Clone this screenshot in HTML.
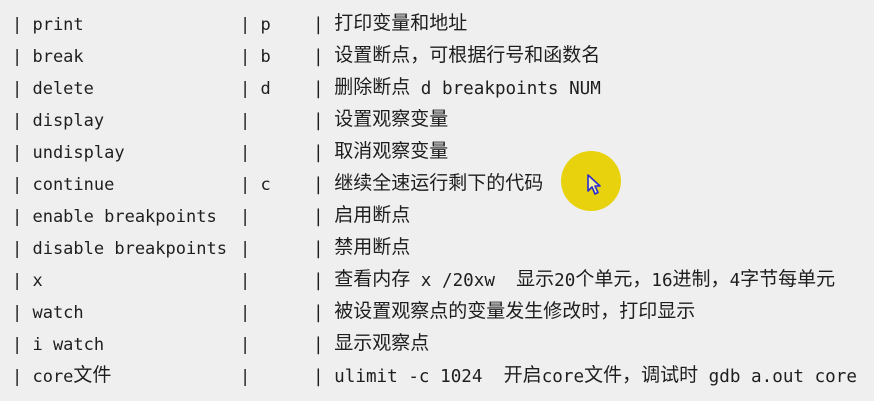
<!DOCTYPE html>
<html><head><meta charset="utf-8"><style>
body{margin:0;width:874px;height:401px;background:#efefef;overflow:hidden;position:relative;font-family:"DejaVu Sans Mono","Noto Sans CJK SC",monospace;font-size:17px;color:#1e1e1e}
.r{position:absolute;left:0;height:32px;line-height:32px;white-space:pre}
.r span{position:absolute;top:0}
.a{left:12px}.b{left:240px}.c{left:313px;font-size:17.6px}
i{font-style:normal;font-family:"Noto Sans CJK SC",sans-serif;font-size:19px;line-height:1;vertical-align:1px}
</style></head><body>
<div style="position:absolute;left:561px;top:151px;width:60px;height:60px;border-radius:50%;background:#e8d20e"></div>
<svg style="position:absolute;left:586px;top:173px" width="18" height="24" viewBox="0 0 18 24"><path d="M2 2 L2 18 L6 14 L9 21 L12 19.5 L9 13 L14 13 Z" fill="#f4ef9a" stroke="#2a2ad0" stroke-width="1.6" stroke-linejoin="round"/></svg>
<div class="r" style="top:9px"><span class="a">| print</span><span class="b">| p</span><span class="c">| <i>打印变量和地址</i></span></div>
<div class="r" style="top:41px"><span class="a">| break</span><span class="b">| b</span><span class="c">| <i>设置断点，可根据行号和函数名</i></span></div>
<div class="r" style="top:73px"><span class="a">| delete</span><span class="b">| d</span><span class="c">| <i>删除断点</i> d breakpoints NUM</span></div>
<div class="r" style="top:105px"><span class="a">| display</span><span class="b">|</span><span class="c">| <i>设置观察变量</i></span></div>
<div class="r" style="top:137px"><span class="a">| undisplay</span><span class="b">|</span><span class="c">| <i>取消观察变量</i></span></div>
<div class="r" style="top:169px"><span class="a">| continue</span><span class="b">| c</span><span class="c">| <i>继续全速运行剩下的代码</i></span></div>
<div class="r" style="top:201px"><span class="a">| enable breakpoints</span><span class="b">|</span><span class="c">| <i>启用断点</i></span></div>
<div class="r" style="top:233px"><span class="a">| disable breakpoints</span><span class="b">|</span><span class="c">| <i>禁用断点</i></span></div>
<div class="r" style="top:265px"><span class="a">| x</span><span class="b">|</span><span class="c">| <i>查看内存</i> x /20xw  <i>显示</i>20<i>个单元，</i>16<i>进制，</i>4<i>字节每单元</i></span></div>
<div class="r" style="top:297px"><span class="a">| watch</span><span class="b">|</span><span class="c">| <i>被设置观察点的变量发生修改时，打印显示</i></span></div>
<div class="r" style="top:329px"><span class="a">| i watch</span><span class="b">|</span><span class="c">| <i>显示观察点</i></span></div>
<div class="r" style="top:361px"><span class="a">| core<i>文件</i></span><span class="b">|</span><span class="c">| ulimit -c 1024  <i>开启</i>core<i>文件，调试时</i> gdb a.out core</span></div>
</body></html>
